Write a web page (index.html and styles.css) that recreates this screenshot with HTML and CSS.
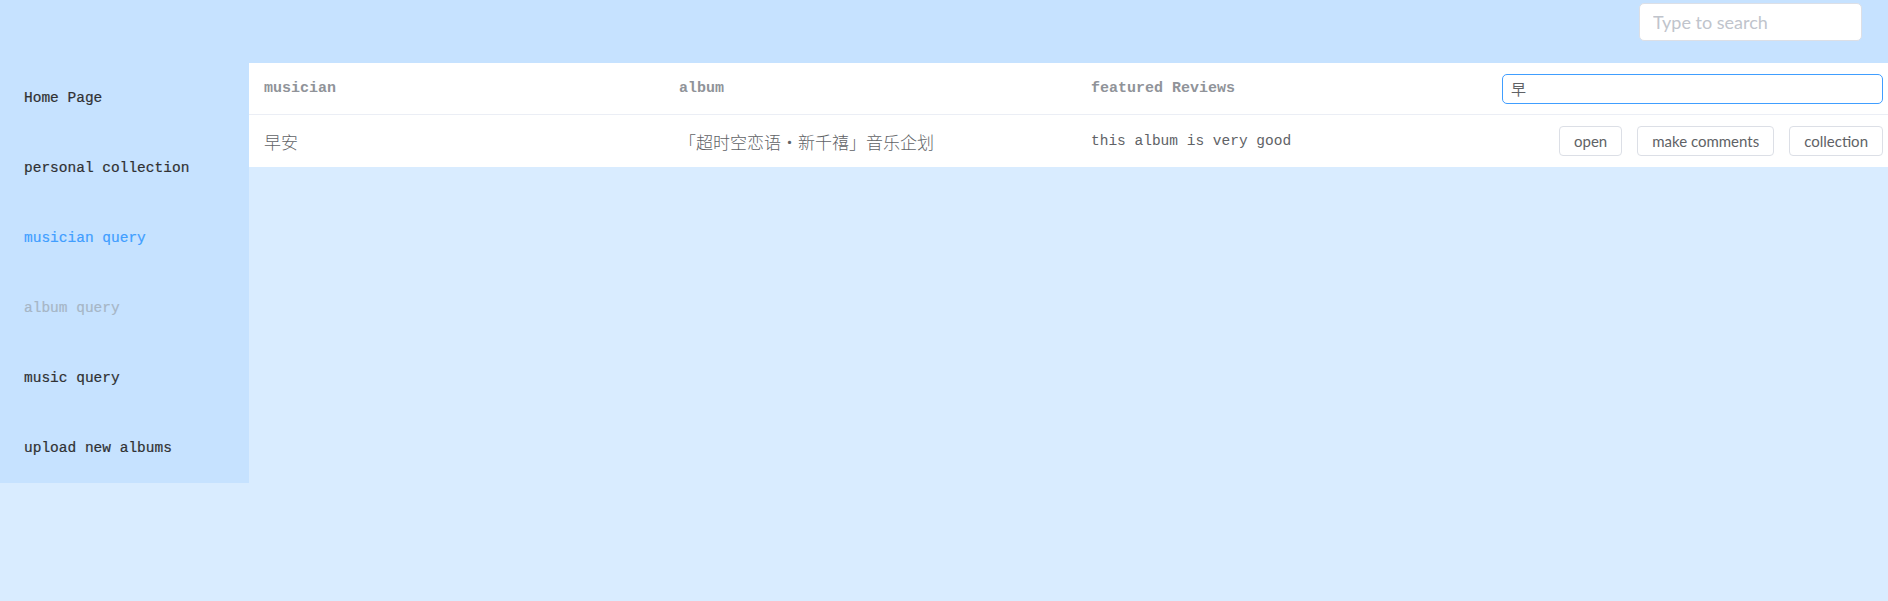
FILE: index.html
```html
<!DOCTYPE html>
<html>
<head>
<meta charset="utf-8">
<link rel="stylesheet" href="styles.css">
</head>
<body>
<header class="topbar">
  <input class="top-search" type="text" placeholder="Type to search">
</header>
<div class="layout">
  <nav class="sidebar">
    <div class="nav-item">Home Page</div>
    <div class="nav-item">personal collection</div>
    <div class="nav-item active">musician query</div>
    <div class="nav-item disabled">album query</div>
    <div class="nav-item">music query</div>
    <div class="nav-item">upload new albums</div>
  </nav>
  <main class="main">
    <div class="table">
      <div class="row head">
        <div class="cell">musician</div>
        <div class="cell">album</div>
        <div class="cell">featured Reviews</div>
        <div class="cell"><input class="filter" type="text" value="早"></div>
      </div>
      <div class="row body">
        <div class="cell cjk">早安</div>
        <div class="cell cjk">「超时空恋语·新千禧」音乐企划</div>
        <div class="cell">this album is very good</div>
        <div class="cell actions">
          <button class="btn">open</button>
          <button class="btn">make comments</button>
          <button class="btn">collection</button>
        </div>
      </div>
    </div>
  </main>
</div>
</body>
</html>
```

FILE: styles.css
```css
* { box-sizing: border-box; }
html, body { margin: 0; padding: 0; }
body {
  background: #d9ecff;
  width: 1888px;
  height: 601px;
  overflow: hidden;
  font-family: "Liberation Mono", "Noto Sans CJK SC", monospace;
}
.topbar {
  height: 63px;
  background: #c6e2ff;
  display: flex;
  justify-content: flex-end;
  align-items: flex-start;
  padding: 3px 26px 0 0;
}
.top-search {
  width: 223px;
  height: 38px;
  border: 1px solid #dcdfe6;
  border-radius: 5px;
  background: #fff;
  padding: 0 13px;
  font-family: "Lato", "Noto Sans", sans-serif;
  font-size: 18px;
  color: #606266;
  outline: none;
}
.top-search::placeholder { color: #c0c4cc; }
.layout {
  display: flex;
  align-items: flex-start;
}
.sidebar {
  width: 249px;
  flex: none;
  background: #c6e2ff;
}
.nav-item {
  height: 70px;
  display: flex;
  align-items: center;
  padding-left: 24px;
  font-size: 14.5px;
  color: #303133;
  -webkit-text-stroke: 0.2px currentColor;
}
.nav-item.active { color: #409eff; }
.nav-item.disabled { color: #a6b6c6; }
.main {
  flex: 1;
}
.table {
  background: #fff;
}
.row {
  display: grid;
  grid-template-columns: 415px 412px 411px 1fr;
  align-items: center;
}
.row.head {
  height: 52px;
  border-bottom: 1px solid #ebeef5;
  color: #909399;
  font-weight: bold;
  font-size: 15px;
}
.row.body {
  height: 52px;
  color: #606266;
  font-size: 14.5px;
}
.cell {
  padding-left: 15px;
  white-space: nowrap;
}
.cjk {
  font-family: "Noto Sans CJK SC", sans-serif;
  font-size: 17px;
  font-weight: 300;
}
.filter {
  width: 381px;
  height: 30px;
  border: 1px solid #409eff;
  border-radius: 5px;
  padding: 0 8px;
  font-family: "Noto Sans CJK SC", sans-serif;
  font-size: 15px;
  color: #606266;
  outline: none;
  display: block;
}
.actions {
  display: flex;
  justify-content: flex-end;
  gap: 15px;
  padding-right: 5px;
}
.btn {
  height: 30px;
  border: 1px solid #dcdfe6;
  border-radius: 4px;
  background: #fff;
  color: #606266;
  font-family: "Lato", "Noto Sans", sans-serif;
  font-size: 15px;
  padding: 0 14px;
  margin: 0;
}
```
